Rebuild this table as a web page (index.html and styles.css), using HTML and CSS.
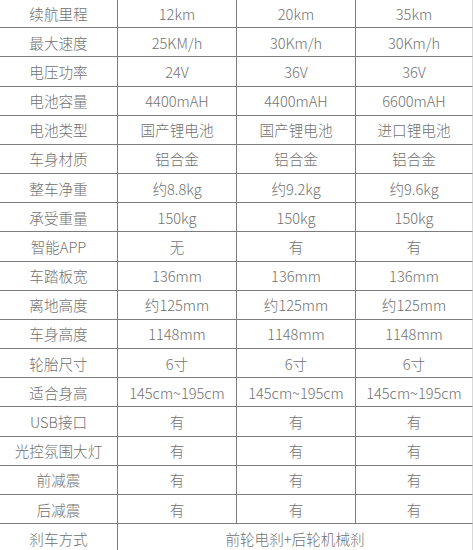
FILE: index.html
```html
<!DOCTYPE html>
<html lang="zh">
<head>
<meta charset="utf-8">
<link rel="stylesheet" href="styles.css">
</head>
<body>
<div class="spec">
  <div class="c">续航里程</div><div class="c">12km</div><div class="c">20km</div><div class="c">35km</div>
  <div class="c">最大速度</div><div class="c">25KM/h</div><div class="c">30Km/h</div><div class="c">30Km/h</div>
  <div class="c">电压功率</div><div class="c">24V</div><div class="c">36V</div><div class="c">36V</div>
  <div class="c">电池容量</div><div class="c">4400mAH</div><div class="c">4400mAH</div><div class="c">6600mAH</div>
  <div class="c">电池类型</div><div class="c">国产锂电池</div><div class="c">国产锂电池</div><div class="c">进口锂电池</div>
  <div class="c">车身材质</div><div class="c">铝合金</div><div class="c">铝合金</div><div class="c">铝合金</div>
  <div class="c">整车净重</div><div class="c">约8.8kg</div><div class="c">约9.2kg</div><div class="c">约9.6kg</div>
  <div class="c">承受重量</div><div class="c">150kg</div><div class="c">150kg</div><div class="c">150kg</div>
  <div class="c">智能APP</div><div class="c">无</div><div class="c">有</div><div class="c">有</div>
  <div class="c">车踏板宽</div><div class="c">136mm</div><div class="c">136mm</div><div class="c">136mm</div>
  <div class="c">离地高度</div><div class="c">约125mm</div><div class="c">约125mm</div><div class="c">约125mm</div>
  <div class="c">车身高度</div><div class="c">1148mm</div><div class="c">1148mm</div><div class="c">1148mm</div>
  <div class="c">轮胎尺寸</div><div class="c">6寸</div><div class="c">6寸</div><div class="c">6寸</div>
  <div class="c">适合身高</div><div class="c">145cm~195cm</div><div class="c">145cm~195cm</div><div class="c">145cm~195cm</div>
  <div class="c">USB接口</div><div class="c">有</div><div class="c">有</div><div class="c">有</div>
  <div class="c">光控氛围大灯</div><div class="c">有</div><div class="c">有</div><div class="c">有</div>
  <div class="c">前减震</div><div class="c">有</div><div class="c">有</div><div class="c">有</div>
  <div class="c">后减震</div><div class="c">有</div><div class="c">有</div><div class="c">有</div>
  <div class="c">刹车方式</div><div class="c span3">前轮电刹+后轮机械刹</div>
</div>
</body>
</html>
```
FILE: styles.css
```css
html, body {
  margin: 0;
  padding: 0;
  background: #ffffff;
  overflow: hidden;
}
.spec {
  display: grid;
  grid-template-columns: 118px 119px 119px 117px;
  grid-auto-rows: 29.18px;
  margin-top: -1px;
  font-family: "Noto Sans CJK SC", "Noto Sans", sans-serif;
  font-weight: 300;
  font-size: 14.6px;
  color: #717171;
}
.c {
  display: flex;
  align-items: center;
  justify-content: center;
  border-right: 1px solid #7c7c7c;
  border-bottom: 1px solid #7c7c7c;
  white-space: nowrap;
}
.c:nth-child(4n) {
  border-right-color: #d8d8d8;
}
.span3 {
  grid-column: span 3;
  border-right-color: #d8d8d8;
}
```
